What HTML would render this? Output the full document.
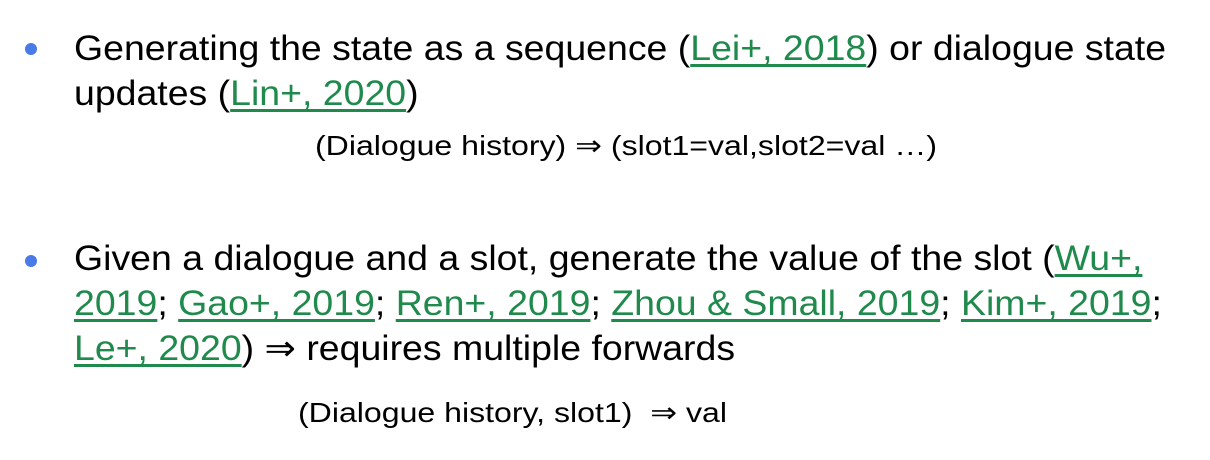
<!DOCTYPE html>
<html><head><meta charset="utf-8"><style>
body{margin:0;width:1210px;height:460px;background:#fff;position:relative;overflow:hidden;font-family:"Liberation Sans",sans-serif;color:#000}
.l{position:absolute;left:74px;font-size:35px;white-space:nowrap;line-height:1;transform:scaleX(1.07);transform-origin:0 0}
.s{position:absolute;font-size:28px;white-space:nowrap;line-height:1;transform:scaleX(1.145);transform-origin:0 0}
a{color:#1f8a4c;text-decoration:underline;text-decoration-thickness:3px;text-underline-offset:4px}
.b{position:absolute;left:25px;width:12px;height:12px;border-radius:50%;background:#4a7ae8}
</style></head><body>
<div class="b" style="top:43px"></div>
<div class="l" style="top:31px">Generating the state as a sequence (<a>Lei+, 2018</a>) or dialogue state</div>
<div class="l" style="top:76px">updates (<a>Lin+, 2020</a>)</div>
<div class="s" style="left:315px;top:132px">(Dialogue history) ⇒ (slot1=val,slot2=val …)</div>
<div class="b" style="top:255px"></div>
<div class="l" style="top:241px">Given a dialogue and a slot, generate the value of the slot (<a>Wu+,</a></div>
<div class="l" style="top:286px"><a>2019</a>; <a>Gao+, 2019</a>; <a>Ren+, 2019</a>; <a>Zhou &amp; Small, 2019</a>; <a>Kim+, 2019</a>;</div>
<div class="l" style="top:331px"><a>Le+, 2020</a>) ⇒ requires multiple forwards</div>
<div class="s" style="left:298px;top:399px">(Dialogue history, slot1)&nbsp; ⇒ val</div>
</body></html>
